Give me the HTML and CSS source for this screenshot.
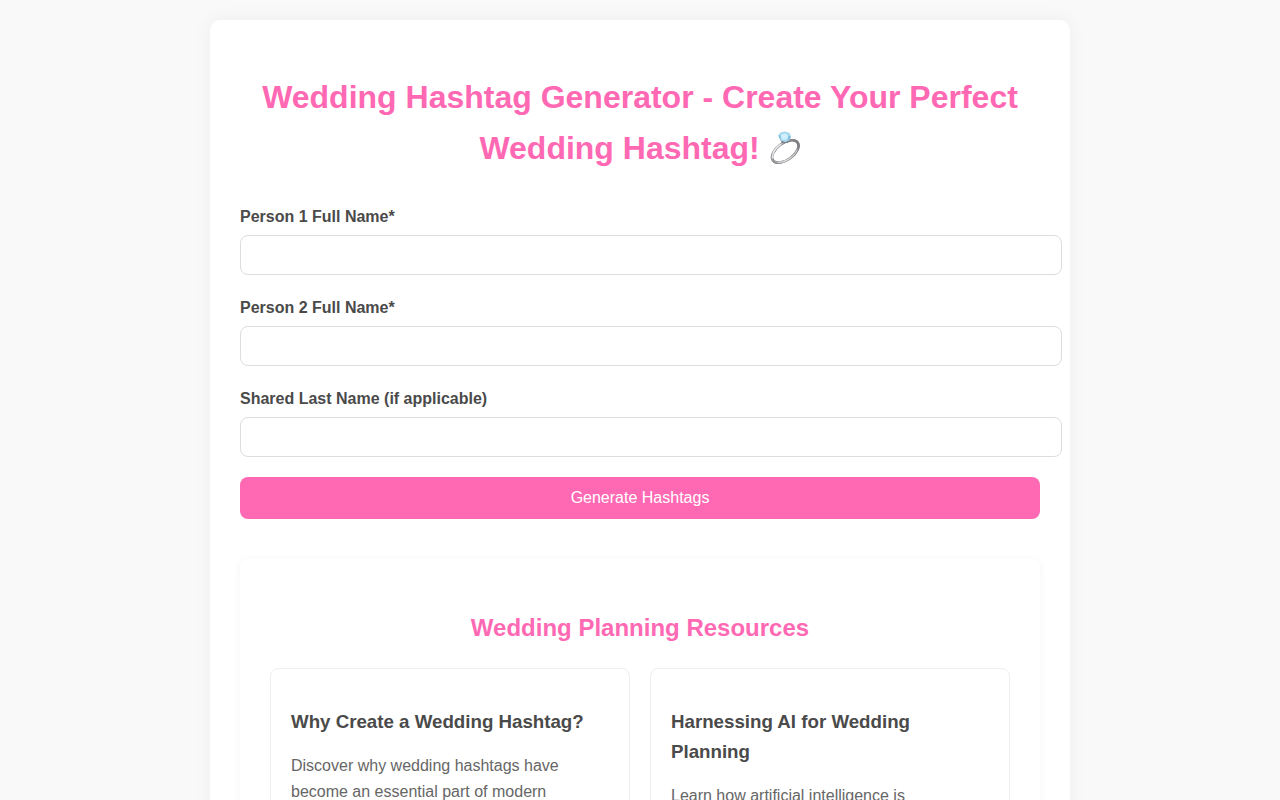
FILE: index.html
```html
<!DOCTYPE html>
<html lang="en">
<head>
  <meta charset="UTF-8">
  <meta name="viewport" content="width=device-width, initial-scale=1.0">
  <title>Wedding Hashtag Generator</title>
  <link rel="stylesheet" href="styles.css">
</head>
<body>

  <main class="container">
    <h1>Wedding Hashtag Generator - Create Your Perfect Wedding Hashtag!
      <svg class="ring" viewBox="0 0 32 33" role="img" aria-label="Ring">
        <defs>
          <linearGradient id="silver" x1="0" y1="0" x2="1" y2="0">
            <stop offset="0" stop-color="#97999c"/>
            <stop offset=".3" stop-color="#c3c5c8"/>
            <stop offset=".6" stop-color="#a7a9ac"/>
            <stop offset="1" stop-color="#7b7d80"/>
          </linearGradient>
        </defs>
        <g transform="rotate(-36 16.3 20.5)" fill="none">
          <ellipse cx="16.3" cy="20.5" rx="15.2" ry="8.400" stroke="#77797c" stroke-width="2.600"/>
          <ellipse cx="16.3" cy="20.3" rx="15.2" ry="8.400" stroke="url(#silver)" stroke-width="2.200"/>
          <path d="M1.800 18.500C5 13.500 11 11.900 17 12" stroke="#eceef0" stroke-width="1.200"/>
          <path d="M4 25C9 29.300 20 30.400 27 26" stroke="#dfe1e3" stroke-width=".8"/>
        </g>
        <path d="M11.500 9L13 12H18.500L20.500 9" fill="#777c82"/>
        <path d="M9.300 4.500L11.500 1.500L16 .5L20.500 2L22 5.500L20.500 9L16.500 11.200L11.500 9.500Z" fill="#a6d7ee"/>
        <path d="M11.500 4L16 2.300L19.500 4.500L18.500 8L14.500 9L11.800 7Z" fill="#d0effc"/>
        <path d="M9.300 4.500L11.500 4L11.800 7L11.500 9.500ZM19.500 4.500L22 5.500L20.500 9L18.500 8Z" fill="#83bedb"/>
      </svg>
    </h1>

    <form onsubmit="return false">
      <div class="form-group">
        <label for="person1">Person 1 Full Name*</label>
        <input type="text" id="person1" required>
      </div>
      <div class="form-group">
        <label for="person2">Person 2 Full Name*</label>
        <input type="text" id="person2" required>
      </div>
      <div class="form-group">
        <label for="last-name">Shared Last Name (if applicable)</label>
        <input type="text" id="last-name">
      </div>
      <button type="submit">Generate Hashtags</button>
    </form>

    <section class="resources">
      <h2>Wedding Planning Resources</h2>
      <div class="resource-grid">
        <article class="resource-card">
          <h3>Why Create a Wedding Hashtag?</h3>
          <p>Discover why wedding hashtags have become an essential part of modern weddings.</p>
        </article>
        <article class="resource-card">
          <h3>Harnessing AI for Wedding Planning</h3>
          <p>Learn how artificial intelligence is revolutionizing wedding planning.</p>
        </article>
      </div>
    </section>
  </main>

</body>
</html>
```

FILE: styles.css
```css
body {
  font-family: Arial, "Liberation Sans", sans-serif;
  line-height: 1.6;
  margin: 0;
  padding: 20px;
  background-color: #f9f9f9;
  color: #4a4a4a;
}

.container {
  max-width: 800px;
  margin: 0 auto;
  padding: 30px;
  background: #fff;
  border-radius: 10px;
  box-shadow: 0 0 20px rgba(0, 0, 0, 0.05);
}

h1, h2 {
  color: #ff69b4;
  text-align: center;
}

h1 {
  margin: 22px 0 30px;
}

.ring {
  width: 32px;
  height: 33px;
  vertical-align: -5px;
  overflow: visible;
}

.form-group {
  margin-bottom: 20px;
}

label {
  display: block;
  margin-bottom: 5px;
  line-height: 26px;
  font-weight: bold;
}

input {
  display: block;
  width: 100%;
  padding: 10px;
  border: 1px solid #ddd;
  border-radius: 8px;
  font-family: inherit;
  font-size: 16px;
}

button {
  width: 100%;
  padding: 12px;
  background-color: #ff69b4;
  color: #fff;
  border: none;
  border-radius: 8px;
  font-family: inherit;
  font-size: 16px;
  cursor: pointer;
}

button:hover {
  background-color: #ff4da6;
}

.resources {
  margin-top: 40px;
  padding: 30px;
  border-radius: 8px;
  box-shadow: 0 2px 10px rgba(0, 0, 0, 0.05);
}

.resource-grid {
  display: grid;
  grid-template-columns: repeat(auto-fit, minmax(300px, 1fr));
  gap: 20px;
}

.resource-card {
  padding: 20px;
  border: 1px solid #eee;
  border-radius: 8px;
}

.resource-card h3 {
  margin-bottom: 16px;
}

.resource-card p {
  margin-top: 0;
  color: #666;
}
```
